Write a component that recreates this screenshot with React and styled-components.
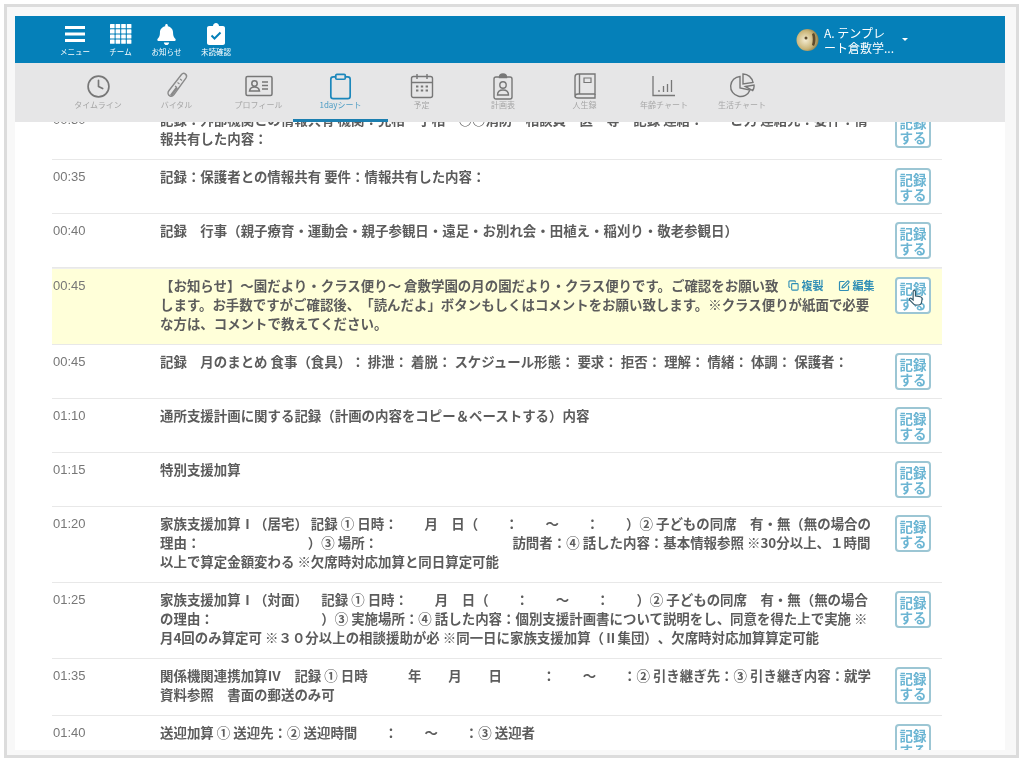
import React from 'react';
import styled, { createGlobalStyle } from 'styled-components';
import { Clock, Clipboard, Copy, SquarePen } from 'lucide-react';
import { FaBell } from 'react-icons/fa';

const GlobalStyle = createGlobalStyle`
    html, body {
        margin: 0;
        padding: 0;
        background: #ffffff;
    }
`;

const MenuIcon = () => (
    <svg width="20" height="20" viewBox="0 0 20 20" fill="#fff">
        <rect x="0" y="2" width="20" height="3" />
        <rect x="0" y="8.5" width="20" height="3" />
        <rect x="0" y="15" width="20" height="3" />
    </svg>
);

const GridIcon = () => (
    <svg width="22" height="20" viewBox="0 0 22 20" fill="#fff">
        {[0, 5.6, 11.2, 16.8].map(x =>
            [0, 5.2, 10.4, 15.6].map(y => <rect key={`${x}-${y}`} x={x} y={y} width="4.6" height="4.2" rx=".5" />)
        )}
    </svg>
);

const ChecklistIcon = () => (
    <svg width="18" height="22" viewBox="0 0 18 22">
        <path fill="#fff" d="M2 3h4c0-1.6 1.3-3 3-3s3 1.4 3 3h4c1 0 2 .9 2 2v15c0 1.1-1 2-2 2H2c-1 0-2-.9-2-2V5c0-1.1 1-2 2-2z" />
        <path fill="none" stroke="#0580b9" strokeWidth="2" d="M4.5 12.5l3 3 6-6" />
    </svg>
);

const ThermometerIcon = () => (
    <svg width="26" height="30" viewBox="0 0 26 30" fill="none" stroke="#8a8a8a" strokeWidth="1.4">
        <path d="M5 19.500L17.500 3.500c1-1.200 2.800-1.400 4-.4s1.300 2.700.4 4L10 23.500c-1 1.300-2.500 2-4 1.500-2.300-.8-2.600-3.500-1-5.500z" />
        <path d="M7 24.500l6-8" strokeWidth="2.400" />
        <path d="M16 8l2 1.500M13.500 11.500l2 1.500M11 15l2 1.500" strokeWidth="1.100" />
    </svg>
);

const CardIcon = () => (
    <svg width="28" height="22" viewBox="0 0 28 22" fill="none" stroke="#777" strokeWidth="1.500">
        <rect x="1" y="1.500" width="26" height="19" rx="1.500" />
        <circle cx="9.500" cy="8.500" r="2.700" />
        <path d="M4.500 16c.5-3 2.500-4 5-4s4.500 1 5 4z" />
        <path d="M17 7h6M17 10.500h6M17 14h6" />
    </svg>
);

const CalendarIcon = () => (
    <svg width="24" height="26" viewBox="0 0 24 26" fill="none" stroke="#777" strokeWidth="1.400">
        <rect x="1.500" y="3.500" width="21" height="21" rx="2" />
        <path d="M1.500 9.500h21M7 1v5M17 1v5" />
        <path d="M6 13.500h2.400M10.800 13.500h2.400M15.600 13.500h2.400M6 17.500h2.400M10.800 17.500h2.400M15.600 17.500h2.400" strokeWidth="2" />
    </svg>
);

const PlanIcon = () => (
    <svg width="20" height="27" viewBox="0 0 20 27" fill="none" stroke="#777" strokeWidth="1.400">
        <rect x="1" y="4" width="18" height="22" rx="2" />
        <path d="M6.500 4.500c0-2 1.500-3.500 3.500-3.500s3.500 1.500 3.500 3.500z" fill="#777" />
        <circle cx="10" cy="12" r="3.200" />
        <path d="M4.500 22c0-3.500 2.500-5 5.500-5s5.500 1.500 5.500 5z" />
    </svg>
);

const BookIcon = () => (
    <svg width="22" height="26" viewBox="0 0 22 26" fill="none" stroke="#777" strokeWidth="1.400">
        <path d="M4 1h17v20H4c-1.700 0-3 1-3 2.300V4c0-1.700 1.300-3 3-3z" />
        <path d="M1 23c0 1.200 1.300 2 3 2h17v-4M5.500 1v20" />
        <path d="M10 5h7v4.500h-7z" strokeWidth="1.200" />
    </svg>
);

const BarsIcon = () => (
    <svg width="24" height="22" viewBox="0 0 24 22" fill="none" stroke="#777" strokeWidth="1.300">
        <path d="M1 1v19.500h22" />
        <path d="M7 17v-2M11.500 17v-6M15.500 17v-8M19.500 17V5" />
    </svg>
);

const PieIcon = () => (
    <svg width="26" height="26" viewBox="0 0 26 26" fill="none" stroke="#777" strokeWidth="1.400">
        <path d="M11 3.500A10 10 0 1 0 21 17l-10-2z" />
        <path d="M14 1c5 0 9 3.500 10 8.500l-10 1.500z" />
        <path d="M16.500 13.500l8.500-1.500c.3 2-.3 4-1.300 5.500z" />
    </svg>
);

const headerItems = [
    { label: 'メニュー', icon: <MenuIcon />, width: 46 },
    { label: 'チーム', icon: <GridIcon />, width: 45 },
    { label: 'お知らせ', icon: <FaBell size={21} color="#fff" />, width: 47 },
    { label: '未読確認', icon: <ChecklistIcon />, width: 52 },
];

const tabs = [
    { label: 'タイムライン', icon: <Clock size={25} color="#777" strokeWidth={1.6} />, width: 76 },
    { label: 'バイタル', icon: <ThermometerIcon />, width: 81 },
    { label: 'プロフィール', icon: <CardIcon />, width: 83 },
    { label: '1dayシート', icon: <Clipboard size={29} color="#1c87bb" strokeWidth={1.4} />, width: 81, active: true },
    { label: '予定', icon: <CalendarIcon />, width: 81 },
    { label: '計画表', icon: <PlanIcon />, width: 82 },
    { label: '人生録', icon: <BookIcon />, width: 81 },
    { label: '年齢チャート', icon: <BarsIcon />, width: 78 },
    { label: '生活チャート', icon: <PieIcon />, width: 78 },
];

const records = [
    { time: '00:30', lines: ['記録：外部機関との情報共有 機関：児相　子相　○○消防　相談員　医　等　記録 連絡：　　ご力 連絡先：要件：情', '報共有した内容：'] },
    { time: '00:35', lines: ['記録：保護者との情報共有 要件：情報共有した内容：'] },
    { time: '00:40', lines: ['記録　行事（親子療育・運動会・親子参観日・遠足・お別れ会・田植え・稲刈り・敬老参観日）'] },
    {
        time: '00:45',
        highlighted: true,
        lines: [
            '【お知らせ】～園だより・クラス便り～ 倉敷学園の月の園だより・クラス便りです。ご確認をお願い致',
            'します。お手数ですがご確認後、「読んだよ」ボタンもしくはコメントをお願い致します。※クラス便りが紙面で必要',
            'な方は、コメントで教えてください。',
        ],
    },
    { time: '00:45', lines: ['記録　月のまとめ 食事（食具）： 排泄： 着脱： スケジュール形態： 要求： 拒否： 理解： 情緒： 体調： 保護者：'] },
    { time: '01:10', lines: ['通所支援計画に関する記録（計画の内容をコピー＆ペーストする）内容'] },
    { time: '01:15', lines: ['特別支援加算'] },
    {
        time: '01:20',
        lines: [
            '家族支援加算Ⅰ（居宅） 記録 ① 日時：　　月　日（　　：　　～　　：　　）② 子どもの同席　有・無（無の場合の',
            '理由：　　　　　　　　）③ 場所：　　　　　　　　　　訪問者：④ 話した内容：基本情報参照 ※30分以上、１時間',
            '以上で算定金額変わる ※欠席時対応加算と同日算定可能',
        ],
    },
    {
        time: '01:25',
        lines: [
            '家族支援加算Ⅰ（対面）　記録 ① 日時：　　月　日（　　：　　～　　：　　）② 子どもの同席　有・無（無の場合',
            'の理由：　　　　　　　　）③ 実施場所：④ 話した内容：個別支援計画書について説明をし、同意を得た上で実施 ※',
            '月4回のみ算定可 ※３０分以上の相談援助が必 ※同一日に家族支援加算（Ⅱ集団）、欠席時対応加算算定可能',
        ],
    },
    {
        time: '01:35',
        lines: [
            '関係機関連携加算Ⅳ　記録 ① 日時　　　年　　月　　日　　　：　　～　　：② 引き継ぎ先：③ 引き継ぎ内容：就学',
            '資料参照　書面の郵送のみ可',
        ],
    },
    { time: '01:40', lines: ['送迎加算 ① 送迎先：② 送迎時間　　：　　～　　：③ 送迎者'] },
];

function Avatar() {
    return (
        <svg width="23" height="24" viewBox="0 0 23 24">
            <defs>
                <radialGradient id="avatarFill" cx="40%" cy="50%" r="60%">
                    <stop offset="0%" stopColor="#f4ecd2" />
                    <stop offset="70%" stopColor="#c9b477" />
                    <stop offset="100%" stopColor="#8d7f4c" />
                </radialGradient>
            </defs>
            <circle cx="11.500" cy="12" r="11" fill="url(#avatarFill)" />
            <circle cx="10" cy="10" r="1.500" fill="#5d4a2c" />
            <path d="M18 5c2 3 2 9 0 13l-2-1c1-4 1-8 0-11z" fill="#5d4a2c" />
        </svg>
    );
}

function RecordRow({ record }) {
    return (
        <Row $highlighted={record.highlighted}>
            <Time>{record.time}</Time>
            <Body>
                {record.lines.map((line, i) => (
                    <Line key={i}>
                        {line}
                        {record.highlighted && i === 0 && (
                            <Actions>
                                <ActionLink><Copy size={11} strokeWidth={2.4} />複製</ActionLink>
                                <ActionLink><SquarePen size={12} strokeWidth={2.4} />編集</ActionLink>
                            </Actions>
                        )}
                    </Line>
                ))}
            </Body>
            <RecordButton>
                記録<br />する
                {record.highlighted && (
                    <HandCursor viewBox="0 0 24 24" width="19" height="19">
                        <path
                            fill="#fff"
                            stroke="#33596b"
                            strokeWidth="1.500"
                            d="M9 11V4.500a1.500 1.500 0 0 1 3 0V10l6 1c1.500.3 2.500 1.500 2.300 3l-.6 4c-.3 2-2 3.500-4 3.500h-3c-1.500 0-2.700-.6-3.600-1.800L4.500 15c-.9-1.300 1-3 2.300-1.800L9 15z"
                        />
                    </HandCursor>
                )}
            </RecordButton>
        </Row>
    );
}

function App() {
    return (
        <>
            <GlobalStyle />
            <Frame>
                <Screen>
                    <Header>
                        <HeaderMenu>
                            {headerItems.map(item => (
                                <HeaderItem key={item.label} $width={item.width}>
                                    <HeaderIcon>{item.icon}</HeaderIcon>
                                    <HeaderLabel>{item.label}</HeaderLabel>
                                </HeaderItem>
                            ))}
                        </HeaderMenu>
                        <UserBox>
                            <Avatar />
                            <UserName>A. テンプレ<br />ート倉敷学...</UserName>
                            <Caret />
                        </UserBox>
                    </Header>
                    <TabBar>
                        {tabs.map(tab => (
                            <Tab key={tab.label} $width={tab.width} $active={tab.active}>
                                <TabIcon>{tab.icon}</TabIcon>
                                <TabLabel $active={tab.active}>{tab.label}</TabLabel>
                            </Tab>
                        ))}
                    </TabBar>
                    <Scroller>
                        <List>
                            {records.map((record, i) => <RecordRow key={i} record={record} />)}
                        </List>
                    </Scroller>
                </Screen>
            </Frame>
        </>
    );
}

export default App;

const Frame = styled.div`
    box-sizing: border-box;
    width: 1015px;
    height: 754px;
    margin: 4px 0 0 4px;
    padding: 9px 11px 5px 8px;
    border: 3px solid #dcdcdc;
    background: #f8f8f8;
    font-family: "Noto Sans CJK JP", "Liberation Sans", sans-serif;
    text-spacing-trim: space-all;
`;

const Screen = styled.div`
    display: flex;
    flex-direction: column;
    height: 734px;
    background: #ffffff;
    overflow: hidden;
    filter: blur(0.45px);
`;

const Header = styled.header`
    display: flex;
    flex: none;
    align-items: center;
    justify-content: space-between;
    height: 47px;
    padding: 0 97px 0 37px;
    background: #0580b9;
`;

const HeaderMenu = styled.nav`
    display: flex;
    align-items: flex-start;
`;

const HeaderItem = styled.div`
    display: flex;
    flex-direction: column;
    align-items: center;
    width: ${props => props.$width}px;
`;

const HeaderIcon = styled.div`
    display: flex;
    align-items: center;
    justify-content: center;
    height: 24px;
`;

const HeaderLabel = styled.div`
    margin-top: 1px;
    font-size: 7.5px;
    line-height: 10px;
    color: #ffffff;
    white-space: nowrap;
`;

const UserBox = styled.div`
    display: flex;
    align-items: center;
    gap: 5px;
`;

const UserName = styled.div`
    width: 73px;
    font-size: 12px;
    line-height: 15px;
    color: #ffffff;
    white-space: nowrap;
`;

const Caret = styled.span`
    width: 0;
    height: 0;
    border-left: 3px solid transparent;
    border-right: 3px solid transparent;
    border-top: 3px solid #ffffff;
`;

const TabBar = styled.nav`
    display: flex;
    flex: none;
    height: 59px;
    padding-left: 45px;
    background: #e6e6e7;
`;

const Tab = styled.div`
    position: relative;
    display: flex;
    flex-direction: column;
    align-items: center;
    width: ${props => props.$width}px;
    padding-top: 9px;

    ${props => props.$active && `
        &::after {
            content: "";
            position: absolute;
            left: -7px;
            right: -7px;
            bottom: 0;
            height: 3px;
            background: #1c7fb0;
        }
    `}
`;

const TabIcon = styled.div`
    display: flex;
    align-items: center;
    justify-content: center;
    height: 28px;
`;

const TabLabel = styled.div`
    margin-top: -1px;
    font-size: 8px;
    line-height: 11px;
    color: ${props => (props.$active ? '#4d9cc4' : '#a6a6a6')};
    white-space: nowrap;
`;

const Scroller = styled.div`
    flex: 1;
    min-height: 0;
    overflow: hidden;
    padding: 0 63px 0 37px;
`;

const List = styled.div`
    margin-top: -19px;
`;

const Row = styled.div`
    display: flex;
    align-items: flex-start;
    box-sizing: border-box;
    padding: 7px 11px 0 1px;
    border-top: ${props => (props.$highlighted ? '1px solid #eeeeee' : 'none')};
    border-bottom: 1px solid #e8e8e8;
    background: ${props => (props.$highlighted ? '#ffffd9' : 'transparent')};
`;

const Time = styled.div`
    flex: none;
    width: 107px;
    font-family: "Liberation Sans", sans-serif;
    font-size: 13px;
    line-height: 19px;
    color: #777777;
`;

const Body = styled.div`
    flex: 1;
    min-width: 0;
    padding-bottom: 11px;
    font-size: 13.45px;
    font-weight: 700;
    line-height: 19px;
    color: #5c5c5c;
`;

const Line = styled.div`
    white-space: pre;
`;

const Actions = styled.span`
    display: inline-flex;
    gap: 14px;
    margin-left: 9px;
`;

const ActionLink = styled.span`
    display: inline-flex;
    align-items: center;
    gap: 3px;
    font-size: 11px;
    color: #2f8eb5;
`;

const RecordButton = styled.div`
    position: relative;
    flex: none;
    box-sizing: border-box;
    width: 36px;
    height: 37px;
    margin: 1px 0 8px;
    padding-top: 2px;
    border: 2px solid #9cc6d4;
    border-radius: 4px;
    background: #ffffff;
    font-size: 13.5px;
    font-weight: 700;
    line-height: 15px;
    text-align: center;
    color: #6bb5d3;
`;

const HandCursor = styled.svg`
    position: absolute;
    left: 9px;
    top: 9px;
`;
